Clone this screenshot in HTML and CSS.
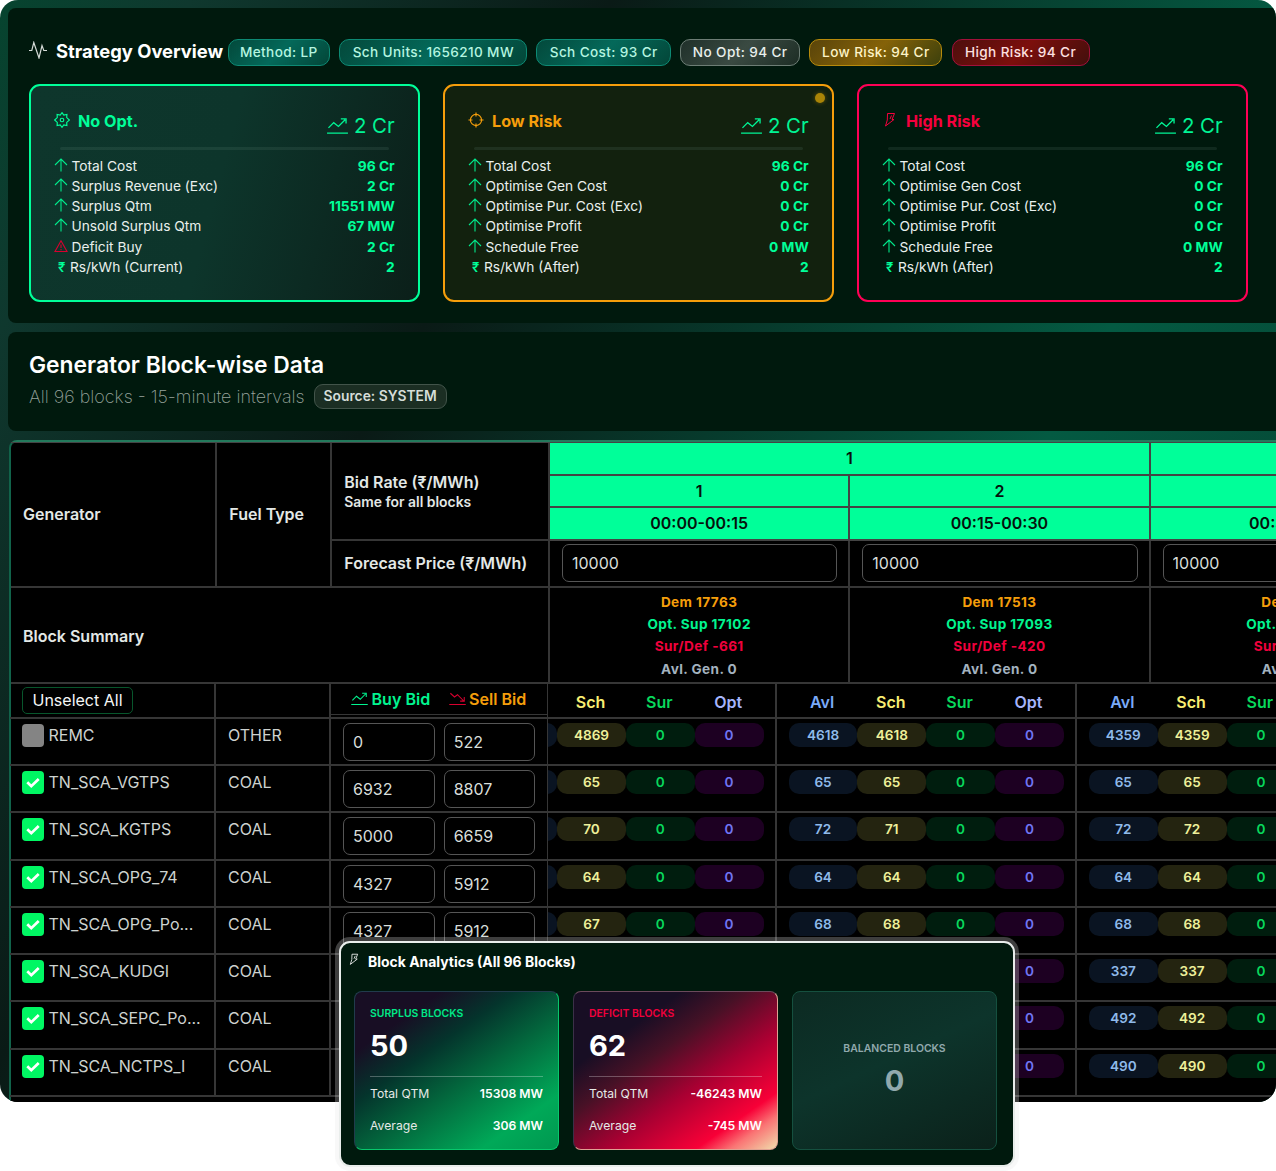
FILE: index.html
```html
<!DOCTYPE html>
<html lang="en">
<head>
    <meta charset="UTF-8">
    <meta name="viewport" content="width=device-width, initial-scale=1.0">
    <title>Strategy Overview</title>
    <link rel="stylesheet" href="styles.css">
</head>
<body>

<!-- Icon definitions -->
<svg class="icon-defs" xmlns="http://www.w3.org/2000/svg">
    <symbol id="pulse" viewBox="0 0 18 18"><path d="M0 9.500h2.800l2-8 5.200 15.500 3-12.500 1.800 5H18"/></symbol>
    <symbol id="gear" viewBox="0 0 18 18"><path d="M9 .8L11 3.500l3.500-.8-.2 3.600 3 2.700-3 2.700.2 3.600-3.500-.8-2 2.700-2-2.700-3.500.8.2-3.600L.7 9l3-2.700-.2-3.600 3.500.8z"/><circle cx="9" cy="9" r="2"/></symbol>
    <symbol id="target" viewBox="0 0 18 18"><circle cx="9" cy="9" r="6.300"/><path d="M9 .5v4.500M9 13v4.500M.5 9H5M13 9h4.500"/></symbol>
    <symbol id="zap" viewBox="0 0 12 16"><path d="M3.500 1.500h7L8 7.500h2L1.500 14l1.800-6z"/><path d="M7.500 3.500L6 7"/></symbol>
    <symbol id="trend-up" viewBox="0 0 22 20"><path d="M1.500 12.500L7 7l5 4 7-7M14.500 3H20v5M0 18h22"/></symbol>
    <symbol id="trend-down" viewBox="0 0 22 20"><path d="M1.500 3L7 8l4-3 8 8M14.500 13.500H20V8M0 18h22"/></symbol>
    <symbol id="arrow-up" viewBox="0 0 14 14"><path d="M7 13.500V1.200M1 7l6-6 6 6"/></symbol>
    <symbol id="warning" viewBox="0 0 14 14"><path d="M7 1.800L13 12.500H1zM7 5.500v3.500M7 10v1.300"/></symbol>
    <symbol id="tick" viewBox="0 0 14 14"><path d="M2 6.800l3.500 3.400 6.500-6.200"/></symbol>
</svg>

<div class="app">

    <!-- Strategy overview -->
    <section class="panel strategy">
        <div class="strategy-head">
            <svg class="icon pulse"><use href="#pulse"/></svg>
            <h2>Strategy Overview</h2>
            <div class="badges">
                <span class="badge w1">Method: LP</span>
                <span class="badge w2">Sch Units: 1656210 MW</span>
                <span class="badge w3">Sch Cost: 93 Cr</span>
                <span class="badge grey w4">No Opt: 94 Cr</span>
                <span class="badge gold w5">Low Risk: 94 Cr</span>
                <span class="badge red w6">High Risk: 94 Cr</span>
            </div>
        </div>
        <div class="cards" id="cards"></div>
    </section>

    <!-- Generator title -->
    <section class="panel generator">
        <h2>Generator Block-wise Data</h2>
        <div class="sub">
            <span>All 96 blocks - 15-minute intervals</span>
            <span class="source">Source: SYSTEM</span>
        </div>
    </section>

    <!-- Block table -->
    <section class="table">
        <div class="thead">
            <div class="cell gen">Generator</div>
            <div class="cell fuel">Fuel Type</div>
            <div class="cell rate">Bid Rate (₹/MWh)<small>Same for all blocks</small></div>
            <div class="cell forecast">Forecast Price (₹/MWh)</div>
            <div class="cell summary">Block Summary</div>
            <div class="cell hour span2">1</div>
            <div class="cell hour span2"></div>
            <div class="cell hour r2">1</div>
            <div class="cell hour r2">2</div>
            <div class="cell hour r2"></div>
            <div class="cell hour r3">00:00-00:15</div>
            <div class="cell hour r3">00:15-00:30</div>
            <div class="cell hour r3">00:30-00:45</div>
            <div class="cell price"><input value="10000"></div>
            <div class="cell price"><input value="10000"></div>
            <div class="cell price"><input value="10000"></div>
            <div class="cell totals"><b class="dem">Dem 17763</b><b class="sup">Opt. Sup 17102</b><b class="def">Sur/Def -661</b><b class="avail">Avl. Gen. 0</b></div>
            <div class="cell totals"><b class="dem">Dem 17513</b><b class="sup">Opt. Sup 17093</b><b class="def">Sur/Def -420</b><b class="avail">Avl. Gen. 0</b></div>
            <div class="cell totals"><b class="dem">Dem 17263</b><b class="sup">Opt. Sup 16835</b><b class="def">Sur/Def -428</b><b class="avail">Avl. Gen. 0</b></div>
        </div>
        <div class="tbody" id="rows">
            <div class="row labels">
                <div class="col name"><button>Unselect All</button></div>
                <div class="col type"></div>
                <div class="col bids">
                    <div class="bid-labels">
                        <span class="buy"><svg class="icon"><use href="#trend-up"/></svg>Buy Bid</span>
                        <span class="sell"><svg class="icon"><use href="#trend-down"/></svg>Sell Bid</span>
                    </div>
                </div>
                <div class="col block first"><span class="avl">Avl</span><span class="sch">Sch</span><span class="sur">Sur</span><span class="opt">Opt</span></div>
                <div class="col block"><span class="avl">Avl</span><span class="sch">Sch</span><span class="sur">Sur</span><span class="opt">Opt</span></div>
                <div class="col block"><span class="avl">Avl</span><span class="sch">Sch</span><span class="sur">Sur</span><span class="opt">Opt</span></div>
            </div>
        </div>
    </section>
</div>

<!-- Floating analytics -->
<aside class="analytics">
    <h3><svg class="icon"><use href="#zap"/></svg>Block Analytics (All 96 Blocks)</h3>
    <div class="stats">
        <div class="stat surplus">
            <div class="label">SURPLUS BLOCKS</div>
            <div class="value">50</div>
            <div class="line"><span>Total QTM</span><b>15308 MW</b></div>
            <div class="line"><span>Average</span><b>306 MW</b></div>
        </div>
        <div class="stat deficit">
            <div class="label">DEFICIT BLOCKS</div>
            <div class="value">62</div>
            <div class="line"><span>Total QTM</span><b>-46243 MW</b></div>
            <div class="line"><span>Average</span><b>-745 MW</b></div>
        </div>
        <div class="stat balanced">
            <div class="label">BALANCED BLOCKS</div>
            <div class="value">0</div>
        </div>
    </div>
</aside>

<script src="script.js"></script>
</body>
</html>
```
FILE: styles.css
```css
* {
    box-sizing: border-box;
}

body {
    margin: 0;
    height: 1171px;
    background: #fff;
    color: #fff;
    font-family: Inter, 'Liberation Sans', sans-serif;
    overflow: hidden;
    position: relative;
}

h2, h3 {
    margin: 0;
}

.icon-defs {
    display: none;
}

.icon {
    fill: none;
    stroke: currentColor;
    stroke-width: 1.4;
    flex: none;
}

.app {
    height: 1102px;
    padding: 8px 0 0 8px;
    border-radius: 18px;
    overflow: hidden;
    background: linear-gradient(120deg, #06442f 0%, #0f382e 10%, #0a1a16 32%, #045a42 68%, #06382a 100%);
}

.panel {
    width: 1290px;
    border-radius: 8px;
    background: #00190d;
}

/* Strategy overview */
.strategy {
    height: 315px;
    padding: 31px 21px 0;
}

.strategy-head {
    display: flex;
    align-items: center;
    height: 27px;
}

.pulse {
    width: 18px;
    height: 18px;
    margin: -5px 9px 0 0;
    stroke-width: 1.200;
    color: #d5dcd8;
}

.strategy-head h2 {
    width: 171.5px;
    margin-top: -4px;
    font-size: 18.4px;
    font-weight: 700;
    white-space: nowrap;
}

.badges {
    display: flex;
    gap: 9.2px;
}

.badge {
    height: 27px;
    border: 1px solid #0d8a74;
    border-radius: 10px;
    background: linear-gradient(135deg, #03493b, #04695a 50%, #034638);
    color: #b5f5e0;
    font-size: 13.6px;
    font-weight: 500;
    letter-spacing: 0.38px;
    line-height: 25px;
    text-align: center;
    white-space: nowrap;
}

.w1 { width: 102.6px; }
.w2 { width: 188px; }
.w3 { width: 134.5px; }
.w4 { width: 120px; }
.w5 { width: 133px; }
.w6 { width: 138px; }

.badge.grey {
    border-color: #6d7d75;
    background: linear-gradient(135deg, #20302a, #3a4a42 50%, #1d2d25);
    color: #e8efeb;
}

.badge.gold {
    border-color: #b78a0b;
    background: linear-gradient(135deg, #59440a, #856208 50%, #3c400c);
    color: #fdf3c6;
}

.badge.red {
    border-color: #a3103a;
    background: linear-gradient(135deg, #4d0f0d, #7c0f0c 50%, #420f0c);
    color: #fde0e0;
}

.cards {
    display: grid;
    grid-template-columns: repeat(3, 390.7px);
    column-gap: 23.3px;
    margin-top: 18px;
}

.card {
    position: relative;
    height: 218px;
    padding: 24px 23px 0 23px;
    border: 2px solid #00ff99;
    border-radius: 11px;
}

.card.green {
    background: linear-gradient(105deg, #0e362c 0%, #0d352b 48%, #0b1f19 100%);
}

.card.orange {
    border-color: #f59e0b;
    background: #12210e;
}

.card.pink {
    border-color: #ff0055;
}

.card .dot {
    position: absolute;
    top: 7px;
    right: 6.5px;
    width: 10px;
    height: 10px;
    border-radius: 50%;
    background: #a98407;
    box-shadow: 0 0 4px rgba(169, 132, 7, 0.5);
}

.card-head {
    display: flex;
    justify-content: space-between;
    height: 37px;
}

.card-title {
    display: flex;
    align-items: center;
    height: 22px;
    font-size: 16.2px;
    font-weight: 700;
}

.card-title .icon {
    width: 16px;
    height: 16px;
    margin: -2px 8px 0 0;
    stroke-width: 1.3;
}

.pink .card-title .icon {
    stroke-width: 1;
}

.green .card-title { color: #00ff99; }
.orange .card-title { color: #f59e0b; }
.pink .card-title { color: #f5003d; }

.gain {
    display: flex;
    align-items: center;
    height: 31px;
    color: #00f595;
    font-size: 20.4px;
}

.gain .icon {
    width: 21px;
    height: 19px;
    margin-right: 6px;
}

.rule {
    height: 3px;
    margin: 0 6px 5.5px;
    border-radius: 2px;
    background: rgba(120, 160, 150, 0.13);
}

.item {
    display: flex;
    align-items: center;
    height: 20.25px;
    color: #e9f0ed;
    font-size: 13.75px;
    white-space: nowrap;
}

.item .icon {
    width: 14px;
    height: 14px;
    margin: -2px 3.5px 0 0;
    color: #00e98b;
    stroke-width: 1.1;
}

.item .icon.warn {
    color: #d8002f;
}

.item i {
    width: 13px;
    margin-right: 3px;
    padding-left: 4px;
    color: #00ff99;
    font-size: 13px;
    font-style: normal;
    font-weight: 600;
}

.item b {
    margin-left: auto;
    color: #00ff99;
    font-weight: 700;
}

/* Generator title */
.generator {
    height: 99px;
    margin: 9px 0;
    padding: 19px 21px 0;
}

.generator h2 {
    font-size: 22.85px;
    font-weight: 600;
    line-height: 28px;
}

.sub {
    display: flex;
    align-items: center;
    gap: 9px;
    height: 35px;
    color: #97a39c;
    font-size: 17.9px;
    font-weight: 200;
}

.source {
    width: 133px;
    height: 25px;
    border: 1px solid #42544a;
    border-radius: 9px;
    background: #1b2e23;
    color: #d5ddd8;
    font-size: 13.8px;
    font-weight: 600;
    line-height: 22px;
    text-align: center;
}

/* Table */
.table {
    width: 1290px;
    height: 680px;
    margin-left: 1px;
    border-top: 2px solid #237a5c;
    border-left: 2px solid #11634a;
    border-radius: 8px 0 0 0;
    background: #000;
}

.thead {
    display: grid;
    grid-template-columns: 206.3px 115px 217.7px 300.3px 300.3px 300.3px;
    grid-template-rows: 32.5px 32.6px 32.8px 46.8px 96.3px;
    border-top: 1px solid #444;
    font-size: 16px;
    font-weight: 600;
}

.cell {
    display: flex;
    align-items: center;
    padding-left: 12px;
    border-right: 2px solid #363636;
    border-bottom: 2px solid #363636;
    color: #e3e8e6;
}

.gen { grid-area: 1 / 1 / 5 / 2; }
.fuel { grid-area: 1 / 2 / 5 / 3; }
.forecast { grid-area: 4 / 3 / 5 / 4; }
.summary { grid-area: 5 / 1 / 6 / 4; padding-top: 2px; }

.rate {
    grid-area: 1 / 3 / 4 / 4;
    flex-direction: column;
    align-items: flex-start;
    justify-content: center;
    gap: 2px;
}

.rate small {
    font-size: 13.9px;
}

.hour {
    justify-content: center;
    padding: 0;
    background: #00ff99;
    color: #06110c;
    border-color: #444;
}

.span2 { grid-column: span 2; }
.span2 + .span2 { grid-column: 6; }
.r2 { grid-row: 2; }
.r3 { grid-row: 3; }

.price {
    grid-row: 4;
    padding-right: 11px;
}

input {
    width: 100%;
    height: 38px;
    margin: 0;
    padding: 0 9px;
    border: 1px solid #555;
    border-radius: 7px;
    background: #000;
    color: #d8dedb;
    font: 400 16px Inter, sans-serif;
    outline: none;
}

.totals {
    grid-row: 5;
    flex-direction: column;
    justify-content: center;
    padding: 1px 0 0;
    font-size: 13.6px;
    letter-spacing: 0.4px;
    line-height: 22.2px;
}

.totals b { font-weight: 700; }
.dem { color: #f59e0b; }
.sup { color: #00f590; }
.def { color: #f0003c; }
.avail { color: #a3b2bf; }

.tbody {
    margin-left: -1px;
}

.row {
    display: flex;
    height: 47.25px;
    border-bottom: 2px solid #363636;
    color: #cdd2cf;
    font-size: 16px;
}

.row.labels {
    height: 35px;
}

.col {
    display: flex;
    flex: none;
    height: 100%;
    border-right: 2px solid #363636;
}

.name {
    width: 206px;
    padding: 5px 0 0 12px;
    line-height: 22px;
    white-space: nowrap;
}

.type {
    width: 115px;
    padding: 5px 0 0 12px;
    line-height: 22px;
}

.bids {
    width: 217px;
    gap: 9px;
    padding: 4px 12.5px 0 12px;
    border-right-width: 1px;
}

.bids input {
    width: 91.7px;
}

.labels .name {
    padding-top: 3px;
}

.labels .bids {
    padding: 0;
}

button {
    width: 111px;
    height: 27px;
    padding: 0;
    border: 1px solid #08562c;
    border-radius: 5px;
    background: #000;
    color: #f5f7f6;
    font: 400 16px Inter, sans-serif;
}

.bid-labels {
    display: flex;
    width: 100%;
    height: 31px;
    padding-left: 20px;
    border-bottom: 1px solid #363636;
    font-size: 16.1px;
    font-weight: 600;
}

.bid-labels span {
    display: flex;
    align-items: center;
    width: 97.5px;
    white-space: nowrap;
}

.bid-labels .icon {
    width: 17px;
    height: 15px;
    margin-right: 3.5px;
}

.buy { color: #00f590; }
.sell { color: #f59e0b; }
.sell .icon { color: #d8002f; }

.check {
    width: 22px;
    height: 23px;
    margin-right: 4.5px;
    padding: 3px;
    border-radius: 4px;
    background: #00f763;
    color: #fff;
    stroke-width: 2.4;
}

.check.off {
    background: #848484;
}

.block {
    width: 300.3px;
    justify-content: flex-end;
    padding: 4px 11.5px 0 0;
    overflow: hidden;
}

.block.first {
    width: 229px;
}

.block span {
    flex: none;
    width: 68.8px;
    height: 24px;
    border-radius: 10px;
    font-size: 13.6px;
    font-weight: 600;
    line-height: 24px;
    text-align: center;
}

.labels .block {
    padding: 6px 12.5px 0 0;
}

.labels .block span {
    font-size: 16px;
}

.avl { color: #7aaaf8; }
.sch { color: #f8ee72; }
.sur { color: #08d85c; }
.opt { color: #a5b4fc; }

.pill.avl { background: #0a1422; color: #8fbaea; }
.pill.sch { background: #242410; color: #eef09a; }
.pill.sur { background: #001d0e; color: #08d85c; }
.pill.opt { background: #1d0022; color: #7074f2; }

/* Floating analytics */
.analytics {
    position: absolute;
    top: 941px;
    left: 339px;
    width: 676px;
    height: 226px;
    padding: 9px 16px 0 13px;
    border: 2px solid #e9edeb;
    border-radius: 11px;
    background: #00190d;
    box-shadow: 0 0 0 4px rgba(230, 230, 230, 0.27);
}

.analytics h3 {
    display: flex;
    align-items: center;
    height: 18px;
    margin-left: -5px;
    font-size: 13.95px;
    font-weight: 700;
}

.analytics h3 .icon {
    width: 10px;
    height: 13px;
    margin: -3px 9px 0 0;
    stroke-width: 1;
}

.stats {
    display: grid;
    grid-template-columns: repeat(3, 205px);
    gap: 14px;
    margin-top: 21px;
}

.stat {
    height: 159px;
    padding: 15px 15px 0;
    border: 1px solid #15503f;
    border-radius: 8px;
}

.surplus {
    border-color: #213b4c #08c76c #08c76c #213b4c;
    background: linear-gradient(145deg, #180e24 20%, #04342c 37%, #03673d 56%, #00a958 82%, #009850 100%);
}

.deficit {
    border-color: #6b4a5c #e0a193 #e0a193 #3b3048;
    background: linear-gradient(145deg, #180e24 25%, #471126 40%, #a80032 60%, #f80037 81%, #fa7474 89%, #f1d3a7 99%);
}

.balanced {
    display: flex;
    flex-direction: column;
    align-items: center;
    padding-top: 50px;
    background: linear-gradient(155deg, #0c2a22, #0d342b 45%, #0b211a);
}

.label {
    font-size: 10.45px;
    font-weight: 600;
    line-height: 14px;
}

.value {
    margin-top: 7px;
    font-size: 29px;
    font-weight: 700;
    line-height: 36px;
}

.surplus .label { color: #00e887; }
.deficit .label { color: #f0003c; }
.balanced .label, .balanced .value { color: #91a9ad; }

.line {
    display: flex;
    justify-content: space-between;
    align-items: center;
    height: 32px;
    color: #e5e9e7;
    font-size: 12.2px;
}

.value + .line {
    height: 33px;
    margin-top: 12px;
    border-top: 1px solid rgba(255, 255, 255, 0.28);
}

.line b {
    color: #fff;
    font-weight: 600;
}
```
FILE: script.js
```js
const strategies = [
    {
        theme: 'green', icon: 'gear', title: 'No Opt.',
        items: [['Total Cost', '96 Cr'], ['Surplus Revenue (Exc)', '2 Cr'], ['Surplus Qtm', '11551 MW'],
            ['Unsold Surplus Qtm', '67 MW'], ['Deficit Buy', '2 Cr'], ['Rs/kWh (Current)', '2']]
    },
    {
        theme: 'orange', icon: 'target', title: 'Low Risk',
        items: [['Total Cost', '96 Cr'], ['Optimise Gen Cost', '0 Cr'], ['Optimise Pur. Cost (Exc)', '0 Cr'],
            ['Optimise Profit', '0 Cr'], ['Schedule Free', '0 MW'], ['Rs/kWh (After)', '2']]
    },
    {
        theme: 'pink', icon: 'zap', title: 'High Risk',
        items: [['Total Cost', '96 Cr'], ['Optimise Gen Cost', '0 Cr'], ['Optimise Pur. Cost (Exc)', '0 Cr'],
            ['Optimise Profit', '0 Cr'], ['Schedule Free', '0 MW'], ['Rs/kWh (After)', '2']]
    }
];

// name, fuel, buy bid, sell bid, then [avl, sch] for each block
const generators = [
    ['REMC', 'OTHER', 0, 522, [4869, 4869], [4618, 4618], [4359, 4359]],
    ['TN_SCA_VGTPS', 'COAL', 6932, 8807, [65, 65], [65, 65], [65, 65]],
    ['TN_SCA_KGTPS', 'COAL', 5000, 6659, [70, 70], [72, 71], [72, 72]],
    ['TN_SCA_OPG_74', 'COAL', 4327, 5912, [64, 64], [64, 64], [64, 64]],
    ['TN_SCA_OPG_Po...', 'COAL', 4327, 5912, [67, 67], [68, 68], [68, 68]],
    ['TN_SCA_KUDGI', 'COAL', 4300, 5900, [337, 337], [337, 337], [337, 337]],
    ['TN_SCA_SEPC_Po...', 'COAL', 4300, 5900, [492, 492], [492, 492], [492, 492]],
    ['TN_SCA_NCTPS_I', 'COAL', 4300, 5900, [490, 490], [490, 490], [490, 490]]
];

function icon(name, cls = '') {
    return `<svg class="icon ${cls}"><use href="#${name}"/></svg>`;
}

function itemIcon(label) {
    if (label.startsWith('Rs/')) return '<i>₹</i>';
    if (label === 'Deficit Buy') return icon('warning', 'warn');
    return icon('arrow-up');
}

document.getElementById('cards').innerHTML = strategies.map(s => `
    <div class="card ${s.theme}">
        ${s.theme === 'orange' ? '<div class="dot"></div>' : ''}
        <div class="card-head">
            <div class="card-title">${icon(s.icon)}${s.title}</div>
            <div class="gain">${icon('trend-up')}2 Cr</div>
        </div>
        <div class="rule"></div>
        ${s.items.map(([label, value]) => `<div class="item">${itemIcon(label)}${label}<b>${value}</b></div>`).join('')}
    </div>`).join('');

document.getElementById('rows').innerHTML += generators.map(([name, fuel, buy, sell, ...blocks], i) => `
    <div class="row">
        <div class="col name">${i === 0 ? '<span class="check off"></span>' : icon('tick', 'check')}${name}</div>
        <div class="col type">${fuel}</div>
        <div class="col bids"><input value="${buy}"><input value="${sell}"></div>
        ${blocks.map(([avl, sch], b) => `
        <div class="col block ${b === 0 ? 'first' : ''}">
            <span class="pill avl">${avl}</span><span class="pill sch">${sch}</span><span class="pill sur">0</span><span class="pill opt">0</span>
        </div>`).join('')}
    </div>`).join('');
```
